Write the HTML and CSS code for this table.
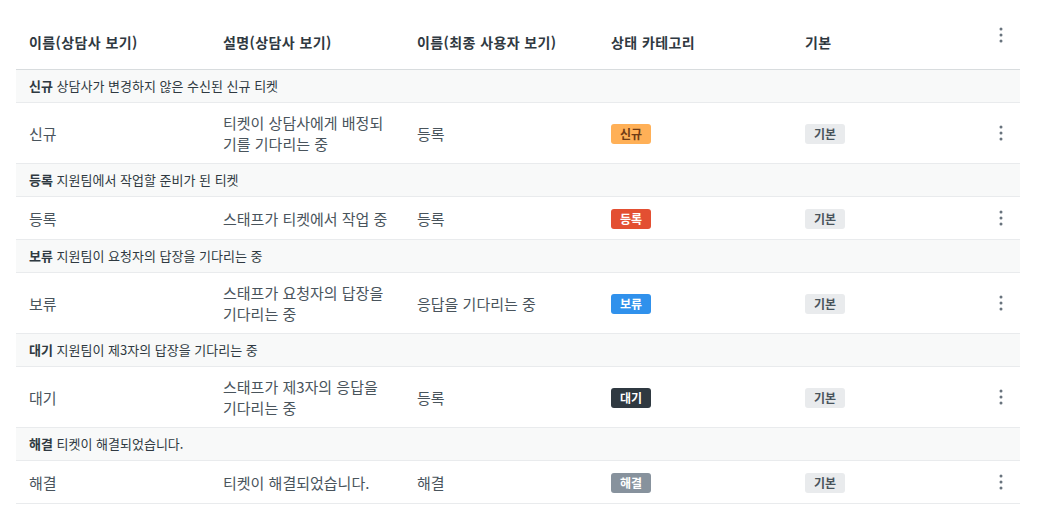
FILE: index.html
```html
<!DOCTYPE html>
<html lang="ko">
<head>
  <meta charset="UTF-8" />
  <meta name="viewport" content="width=device-width, initial-scale=1.0"/>
  <title>티켓 상태</title>
  <link rel="stylesheet" href="styles.css">
</head>
<body>

  <table class="statuses">
    <colgroup>
      <col class="col-text"><col class="col-text"><col class="col-text"><col class="col-text"><col class="col-text"><col class="col-menu">
    </colgroup>
    <thead>
      <tr>
        <th>이름(상담사 보기)</th>
        <th>설명(상담사 보기)</th>
        <th>이름(최종 사용자 보기)</th>
        <th>상태 카테고리</th>
        <th>기본</th>
        <th class="menu-cell"><button class="kebab" aria-label="메뉴"><svg width="4" height="16" viewBox="0 0 4 16"><circle cx="2" cy="2" r="1.5"/><circle cx="2" cy="8" r="1.5"/><circle cx="2" cy="14" r="1.5"/></svg></button></th>
      </tr>
    </thead>
    <tbody>
      <tr class="group"><td colspan="6"><b>신규</b> 상담사가 변경하지 않은 수신된 신규 티켓</td></tr>
      <tr>
        <td>신규</td>
        <td>티켓이 상담사에게 배정되기를 기다리는 중</td>
        <td>등록</td>
        <td><span class="tag tag-new">신규</span></td>
        <td><span class="tag tag-default">기본</span></td>
        <td class="menu-cell"><button class="kebab" aria-label="메뉴"><svg width="4" height="16" viewBox="0 0 4 16"><circle cx="2" cy="2" r="1.5"/><circle cx="2" cy="8" r="1.5"/><circle cx="2" cy="14" r="1.5"/></svg></button></td>
      </tr>

      <tr class="group"><td colspan="6"><b>등록</b> 지원팀에서 작업할 준비가 된 티켓</td></tr>
      <tr>
        <td>등록</td>
        <td>스태프가 티켓에서 작업 중</td>
        <td>등록</td>
        <td><span class="tag tag-open">등록</span></td>
        <td><span class="tag tag-default">기본</span></td>
        <td class="menu-cell"><button class="kebab" aria-label="메뉴"><svg width="4" height="16" viewBox="0 0 4 16"><circle cx="2" cy="2" r="1.5"/><circle cx="2" cy="8" r="1.5"/><circle cx="2" cy="14" r="1.5"/></svg></button></td>
      </tr>

      <tr class="group"><td colspan="6"><b>보류</b> 지원팀이 요청자의 답장을 기다리는 중</td></tr>
      <tr>
        <td>보류</td>
        <td>스태프가 요청자의 답장을 기다리는 중</td>
        <td>응답을 기다리는 중</td>
        <td><span class="tag tag-pending">보류</span></td>
        <td><span class="tag tag-default">기본</span></td>
        <td class="menu-cell"><button class="kebab" aria-label="메뉴"><svg width="4" height="16" viewBox="0 0 4 16"><circle cx="2" cy="2" r="1.5"/><circle cx="2" cy="8" r="1.5"/><circle cx="2" cy="14" r="1.5"/></svg></button></td>
      </tr>

      <tr class="group"><td colspan="6"><b>대기</b> 지원팀이 제3자의 답장을 기다리는 중</td></tr>
      <tr>
        <td>대기</td>
        <td>스태프가 제3자의 응답을 기다리는 중</td>
        <td>등록</td>
        <td><span class="tag tag-hold">대기</span></td>
        <td><span class="tag tag-default">기본</span></td>
        <td class="menu-cell"><button class="kebab" aria-label="메뉴"><svg width="4" height="16" viewBox="0 0 4 16"><circle cx="2" cy="2" r="1.5"/><circle cx="2" cy="8" r="1.5"/><circle cx="2" cy="14" r="1.5"/></svg></button></td>
      </tr>

      <tr class="group"><td colspan="6"><b>해결</b> 티켓이 해결되었습니다.</td></tr>
      <tr>
        <td>해결</td>
        <td>티켓이 해결되었습니다.</td>
        <td>해결</td>
        <td><span class="tag tag-solved">해결</span></td>
        <td><span class="tag tag-default">기본</span></td>
        <td class="menu-cell"><button class="kebab" aria-label="메뉴"><svg width="4" height="16" viewBox="0 0 4 16"><circle cx="2" cy="2" r="1.5"/><circle cx="2" cy="8" r="1.5"/><circle cx="2" cy="14" r="1.5"/></svg></button></td>
      </tr>
    </tbody>
  </table>

</body>
</html>
```

FILE: styles.css
```css
body {
  margin: 16px 24px 0 16px;
  font-family: "Noto Sans CJK KR", "Noto Sans", sans-serif;
  font-size: 14px;
  color: #49545c;
  background: #fff;
}

.statuses {
  width: 1004px;
  border-collapse: collapse;
  table-layout: fixed;
}

.col-text {
  width: 194px;
}

.col-menu {
  width: 34px;
}

th {
  padding: 16px 13px;
  font-size: 14px;
  line-height: 21px;
  letter-spacing: 0.4px;
  font-weight: 600;
  color: #2f3941;
  text-align: left;
  border-bottom: 1px solid #d8dcde;
}

td {
  padding: 9px 13px;
  font-size: 15px;
  line-height: 21px;
  vertical-align: middle;
  border-bottom: 1px solid #e9ebed;
}

.group td {
  padding: 6px 13px;
  font-size: 13px;
  line-height: 20px;
  color: #2f3941;
  background: #f8f9f9;
}

.group b {
  font-weight: 700;
}

.menu-cell {
  padding: 9px 0 9px 3px;
}

th.menu-cell {
  padding: 7px 0 0 3px;
  vertical-align: top;
}

.kebab {
  display: flex;
  align-items: center;
  justify-content: center;
  width: 24px;
  height: 24px;
  padding: 0;
  border: none;
  background: none;
  fill: #68737d;
  cursor: pointer;
}

.tag {
  display: inline-block;
  min-width: 40px;
  height: 20px;
  padding: 0 8px;
  box-sizing: border-box;
  border-radius: 3px;
  font-size: 12px;
  font-weight: 600;
  line-height: 20px;
  text-align: center;
  vertical-align: middle;
}

.tag-new {
  background: #ffb057;
  color: #703b15;
}

.tag-open {
  background: #e34f32;
  color: #fff;
}

.tag-pending {
  background: #3091ec;
  color: #fff;
}

.tag-hold {
  background: #2f3941;
  color: #fff;
}

.tag-solved {
  background: #87929d;
  color: #fff;
}

.tag-default {
  background: #e9ebed;
  color: #49545c;
}
```
